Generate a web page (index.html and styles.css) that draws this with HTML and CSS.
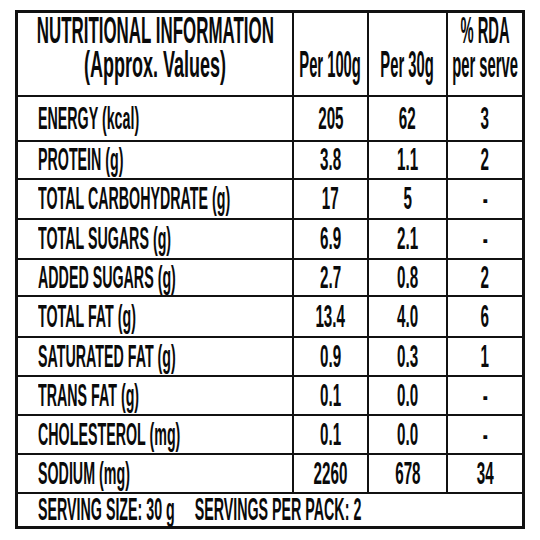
FILE: index.html
```html
<!DOCTYPE HTML>
<html>
<head>
    <title>Nutritional Information</title>
    <link rel="stylesheet" href="styles.css">
</head>
<body>
    <div id="panel">
        <div class="cell head title"><span class="t">NUTRITIONAL INFORMATION</span><span class="t">(Approx. Values)</span></div>
        <div class="cell head"><span class="t">Per 100g</span></div>
        <div class="cell head"><span class="t">Per 30g</span></div>
        <div class="cell head"><span class="t">% RDA</span><span class="t">per serve</span></div>

        <div class="cell name"><span class="t">ENERGY (kcal)</span></div>
        <div class="cell num"><span class="t">205</span></div>
        <div class="cell num"><span class="t">62</span></div>
        <div class="cell num"><span class="t">3</span></div>

        <div class="cell name"><span class="t">PROTEIN (g)</span></div>
        <div class="cell num"><span class="t">3.8</span></div>
        <div class="cell num"><span class="t">1.1</span></div>
        <div class="cell num"><span class="t">2</span></div>

        <div class="cell name"><span class="t">TOTAL CARBOHYDRATE (g)</span></div>
        <div class="cell num"><span class="t">17</span></div>
        <div class="cell num"><span class="t">5</span></div>
        <div class="cell num"><span class="t">-</span></div>

        <div class="cell name"><span class="t">TOTAL SUGARS (g)</span></div>
        <div class="cell num"><span class="t">6.9</span></div>
        <div class="cell num"><span class="t">2.1</span></div>
        <div class="cell num"><span class="t">-</span></div>

        <div class="cell name"><span class="t">ADDED SUGARS (g)</span></div>
        <div class="cell num"><span class="t">2.7</span></div>
        <div class="cell num"><span class="t">0.8</span></div>
        <div class="cell num"><span class="t">2</span></div>

        <div class="cell name"><span class="t">TOTAL FAT (g)</span></div>
        <div class="cell num"><span class="t">13.4</span></div>
        <div class="cell num"><span class="t">4.0</span></div>
        <div class="cell num"><span class="t">6</span></div>

        <div class="cell name"><span class="t">SATURATED FAT (g)</span></div>
        <div class="cell num"><span class="t">0.9</span></div>
        <div class="cell num"><span class="t">0.3</span></div>
        <div class="cell num"><span class="t">1</span></div>

        <div class="cell name"><span class="t">TRANS FAT (g)</span></div>
        <div class="cell num"><span class="t">0.1</span></div>
        <div class="cell num"><span class="t">0.0</span></div>
        <div class="cell num"><span class="t">-</span></div>

        <div class="cell name"><span class="t">CHOLESTEROL (mg)</span></div>
        <div class="cell num"><span class="t">0.1</span></div>
        <div class="cell num"><span class="t">0.0</span></div>
        <div class="cell num"><span class="t">-</span></div>

        <div class="cell name"><span class="t">SODIUM (mg)</span></div>
        <div class="cell num"><span class="t">2260</span></div>
        <div class="cell num"><span class="t">678</span></div>
        <div class="cell num"><span class="t">34</span></div>

        <div class="cell name serving"><span class="t">SERVING SIZE: 30 g&nbsp;&nbsp;&nbsp;&nbsp; SERVINGS PER PACK: 2</span></div>
    </div>
</body>
</html>
```
FILE: styles.css
```css
body{
    background-color: white;
    margin: 0px;
}
#panel{
    margin: 10px 0 0 15px;
    width: 504px;
    border: 3px solid #111;
    background-color: #111;
    display: grid;
    grid-template-columns: 274px 73px 77px 74px;
    grid-template-rows: 82px 43px 36px 38px 38px 35px 39px 37px 37px 37px 37px 32px;
    gap: 2px;
    font-family: "Liberation Sans", sans-serif;
    font-weight: bold;
    font-size: 31px;
    color: #0a0a0a;
}
.cell{
    background-color: white;
    display: flex;
    align-items: center;
    justify-content: center;
    overflow: visible;
}
.t{
    display: inline-block;
    white-space: nowrap;
    transform: scaleX(.49);
    line-height: 32px;
}
.name{
    justify-content: flex-start;
    padding-left: 20px;
}
.name .t{
    transform: scaleX(.46);
    transform-origin: left center;
}
.serving{
    grid-column: 1 / 5;
    font-size: 31px;
}
.serving .t{
    transform: scaleX(.46);
}
.head{
    flex-direction: column;
    justify-content: flex-end;
    padding-bottom: 13px;
    font-size: 36px;
}
.head .t{
    line-height: 34px;
    transform: scaleX(.41);
}
.title .t{
    transform: scaleX(.47);
}
.title .t + .t{
    transform: scaleX(.5);
}
```
